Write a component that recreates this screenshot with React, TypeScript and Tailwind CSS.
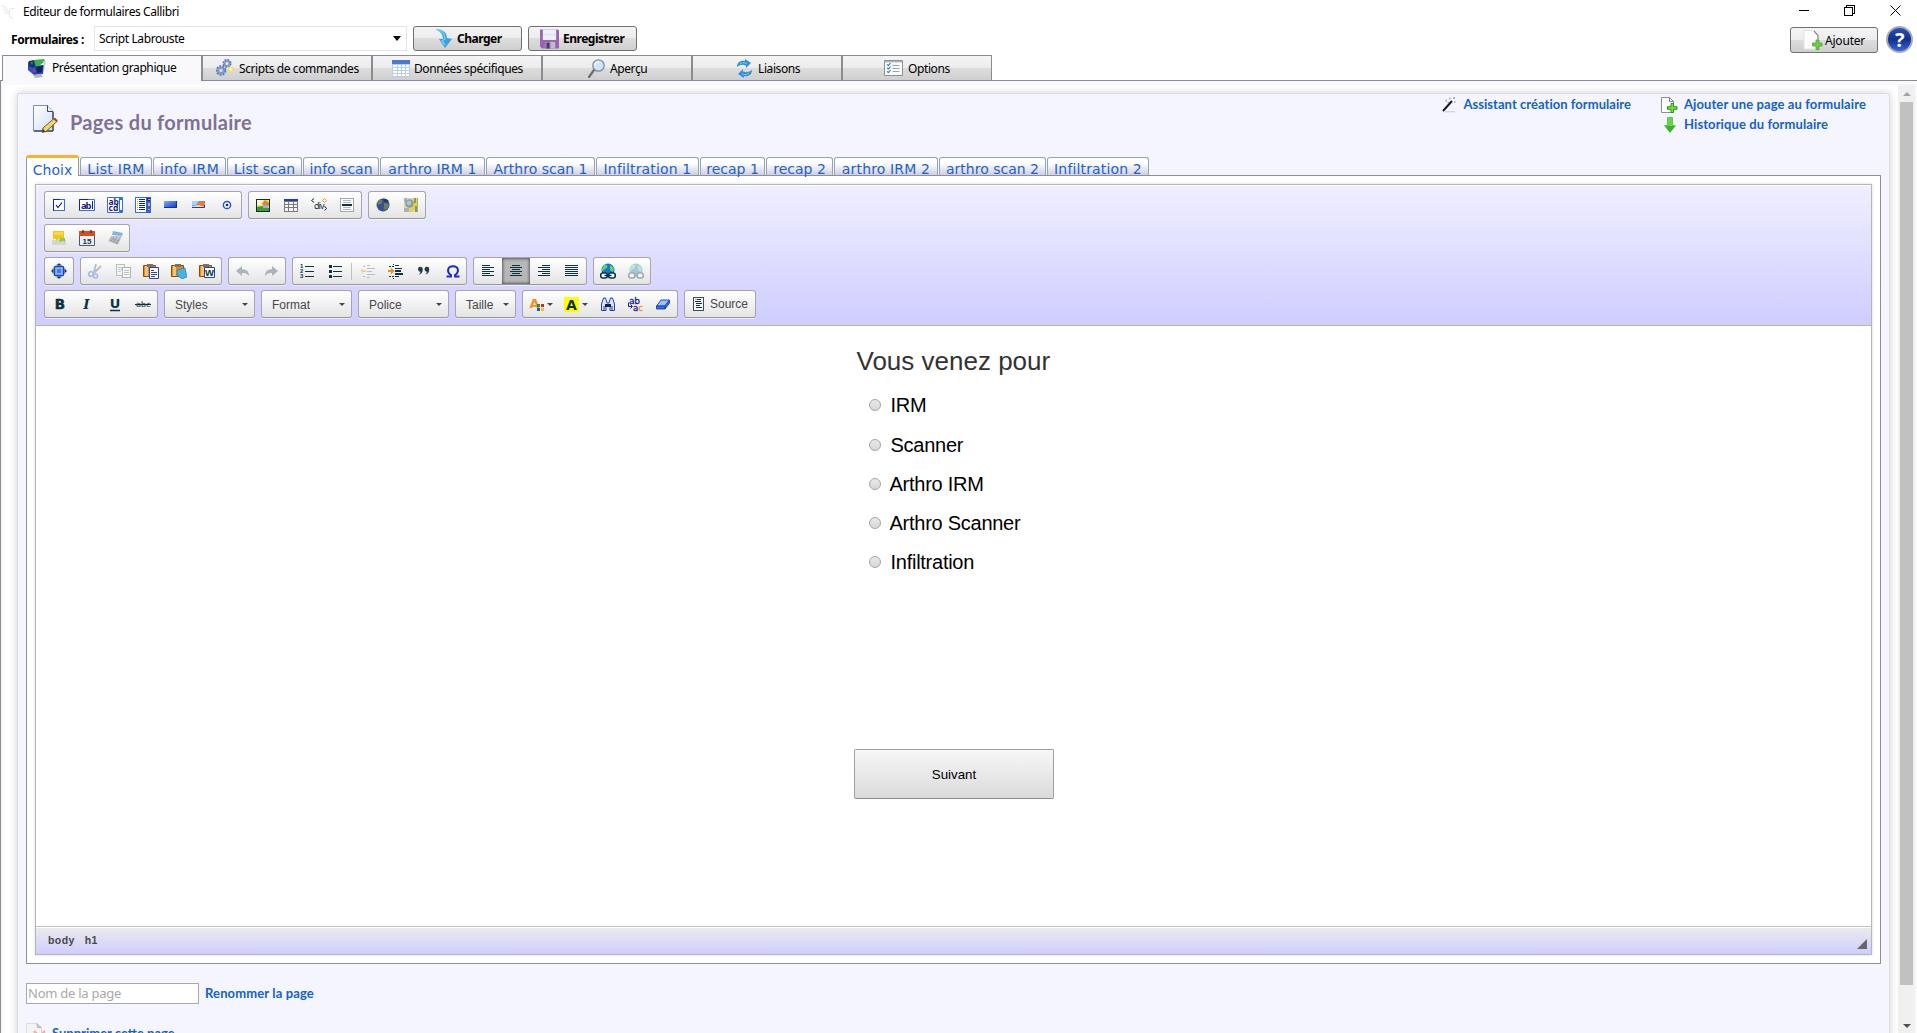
import React from 'react';

type Kids = { children?: React.ReactNode };

function Svg({ children, w = 16, h = 16, box = '0 0 16 16', crisp = false, cls = '' }: Kids & { w?: number; h?: number; box?: string; crisp?: boolean; cls?: string }) {
  return (
    <svg width={w} height={h} viewBox={box} fill="none" shapeRendering={crisp ? 'crispEdges' : 'auto'} className={`block shrink-0 ${cls}`}>
      {children}
    </svg>
  );
}

/* ---------- window level icons ---------- */

const BirdLogo = () => (
  <Svg w={14} h={14}>
    <path d="M0 1c3 1 5 2 6 5M1 5c2 0 4 1 5 3M3 9c2 0 3 0 4 1M14 4c-4-1-6 2-6 5 0 4 2 6 5 6" stroke="#e2dfdb" strokeWidth="1.1" />
  </Svg>
);

const LoadIcon = () => (
  <Svg w={17} h={19} box="0 0 17 19">
    <path d="M0 0C7 0 12 3 12 9l5 1-7 9-6-9h4C8 5 5 2 0 0z" fill="#36a3e3" />
    <path d="M3 1c5 1 7 4 7 9l-3 2 3 4" stroke="#7fcaf2" strokeWidth="1.4" />
  </Svg>
);

const SaveIcon = () => (
  <Svg w={19} h={20} box="0 0 20 20">
    <path d="M0 0h19l1 1v19H2l-2-2z" fill="#9a63b4" />
    <path d="M3 0h14v11H3z" fill="#eef0f8" />
    <path d="M3 5h14v1H3z" fill="#d9dcea" />
    <path d="M5 13h11v7H5z" fill="#8f8a99" />
    <path d="M7 14h3v6H7z" fill="#5d2c7c" />
    <path d="M11 13h5v7h-5z" fill="#bfbcc9" />
  </Svg>
);

const PresentationIcon = () => (
  <Svg w={18} h={19} box="0 0 18 19">
    <path d="M0 3 7 1l2 6 7-1-1 9-9 1-6-5z" fill="#2748c4" />
    <path d="M1 2l6-1 2 4-4 4-4-2z" fill="#1c2f6c" />
    <path d="M6 1l10-1 1 2-7 6-3-2z" fill="#37b24a" />
    <path d="M1 8l5 1 2 3-4 1-3-3z" fill="#2b52d6" />
    <path d="M8 8l7-2-1 7-5 1z" fill="#14235a" />
    <path d="M2 3l3 0-1 3z" fill="#2e8d3a" />
    <path d="M5 10l3 2-3 2z" fill="#c8324f" />
    <path d="M5 16l8-1 2 3-8 1z" fill="#b4b4bb" />
    <path d="M15 2l3 0-2 9z" fill="#c9cbd2" />
  </Svg>
);

const GearsIcon = () => (
  <Svg w={18} h={18} box="0 0 18 18">
    <circle cx="11" cy="4.5" r="3.2" stroke="#5a78b8" strokeWidth="2.6" strokeDasharray="1.7 0.8" />
    <circle cx="11" cy="4.5" r="2.4" stroke="#7e98cd" strokeWidth="1.6" />
    <circle cx="5" cy="11.5" r="4" stroke="#5a78b8" strokeWidth="2.6" strokeDasharray="1.9 0.9" />
    <circle cx="5" cy="11.5" r="2.8" stroke="#7e98cd" strokeWidth="2" />
    <path d="M14.5 7v7M11 10.500h7M12 8l5 5M17 8l-5 5" stroke="#f5dd7a" strokeWidth="1.3" />
    <circle cx="14.500" cy="10.500" r="1.4" fill="#fff6c4" />
  </Svg>
);

const GridIcon = () => (
  <Svg w={18} h={17} box="0 0 18 17" crisp>
    <path d="M0 0h18v17H0z" fill="#b7cdee" />
    <path d="M0 0h18v4H0z" fill="#4a7ad0" />
    <path d="M1 5h4v2H1zM6 5h3v2H6zM10 5h3v2h-3zM14 5h3v2h-3zM1 8h4v2H1zM6 8h3v2H6zM10 8h3v2h-3zM14 8h3v2h-3zM1 11h4v2H1zM6 11h3v2H6zM10 11h3v2h-3zM14 11h3v2h-3zM1 14h4v2H1zM6 14h3v2H6zM10 14h3v2h-3zM14 14h3v2h-3z" fill="#fff" />
  </Svg>
);

const MagnifierIcon = () => (
  <Svg w={17} h={19} box="0 0 17 19">
    <path d="M1 18l5-7" stroke="#6f6b6b" strokeWidth="2.2" strokeLinecap="round" />
    <circle cx="10.500" cy="6.500" r="5.700" fill="#cfe5f8" stroke="#7c8fa8" strokeWidth="1.3" />
    <path d="M7 6c0-2 2-3.500 4-3" stroke="#fff" strokeWidth="1.4" />
  </Svg>
);

const RefreshIcon = () => (
  <Svg w={15} h={19} box="0 0 15 19">
    <path d="M0 8C0 3 4 1 8 2V0l6 4-5 5V6.500C5 5 3 6 0 8z" fill="#2f93d3" />
    <path d="M15 11c0 5-4 7-8 6v2l-6-4 5-5v2.500c4 1.500 6 .5 9-1.500z" fill="#2f93d3" />
    <path d="M3 5c2-1.500 4-1.500 7-.5M5 15c3 1 5 1 7-1" stroke="#7dc6ee" />
  </Svg>
);

const OptionsIcon = () => (
  <Svg w={19} h={16} box="0 0 19 16">
    <path d="M.5.5h18v15H.5z" fill="#fbfbfc" stroke="#8b8f96" />
    <path d="M1 1h17v1.500H1z" fill="#b4b8c2" />
    <path d="M8.500 5.500h7M8.500 8.500h7M8.500 11.500h7" stroke="#9b9fb0" />
    <path d="M3 4.500l1.500 1L6.500 3M3 8l1.500 1 2-2.500M3 11.500l1.500 1 2-2.500" stroke="#2b84b4" strokeWidth="1.2" />
  </Svg>
);

const AddPageIcon = () => (
  <Svg w={17} h={16} box="0 0 17 16">
    <path d="M.5.500h8l4 4v11H.500z" fill="#fff" stroke="#8d8d96" />
    <path d="M8.500.500v4h4" stroke="#7f7f86" />
    <path d="M10 6.500h2.500v3.200H16v2.600h-3.500v3.200H10v-3.200H6.500V9.700H10z" fill="#7be03c" stroke="#2a9a17" strokeWidth="1" />
  </Svg>
);

const NewFormIcon = () => (
  <Svg w={20} h={20} box="0 0 20 20">
    <path d="M1 .5h10l4 5V19H1z" fill="#fdfdfd" stroke="#e2e2e2" />
    <path d="M11 1l4 4.500v4" stroke="#8c8c8c" strokeWidth="1.2" />
    <path d="M13 10h3v3h3v3h-3v3.500h-3V16H9.500v-3H13z" fill="#6fce45" stroke="#4aa52c" strokeWidth=".8" />
  </Svg>
);

const HelpIcon = () => (
  <span className="flex h-[27px] w-[27px] items-center justify-center rounded-full border-[2px] border-[#a9abb3] bg-linear-to-b from-[#2a52b8] via-[#12308f] to-[#3a66e0] font-['Noto_Sans',sans-serif] text-[20px] leading-none font-bold text-white">?</span>
);

const WandIcon = () => (
  <Svg w={15} h={16} box="0 0 15 16">
    <path d="M1 14 10 4" stroke="#16161c" strokeWidth="1.9" />
    <path d="M3 14.800h10" stroke="#c9c9cf" />
    <path d="M7 1.500h1.500M3.500 3.500H5M11 1h2M12 5h1.500M5.500 5.500H7" stroke="#9c9ca3" strokeWidth="1.300" />
  </Svg>
);

const GreenArrow = () => (
  <Svg w={12} h={16} box="0 0 12 16">
    <path d="M3.500.500h5v8h3L6 15.500.500 8.500h3z" fill="#62d64a" stroke="#4cc038" strokeWidth=".8" />
    <path d="M1 9h10L6 15.500z" fill="#3fb02d" />
  </Svg>
);

const EditPageIcon = () => (
  <Svg w={25} h={29} box="0 0 25 29">
    <defs>
      <linearGradient id="sheet" x1="0" y1="0" x2="1" y2="1">
        <stop offset="0" stopColor="#ffffff" />
        <stop offset="1" stopColor="#cfe0f6" />
      </linearGradient>
    </defs>
    <path d="M.5.500h14l5.500 6v19.500H.500z" fill="url(#sheet)" stroke="#7d93b5" />
    <path d="M20 7v19M1 26h19" stroke="#3d4f6d" strokeWidth="1.4" />
    <path d="M14.500.500v6H20" fill="#e8f0fb" stroke="#35496b" />
    <path d="M9 27l1-4L21 13.500l3 3L13 26.500z" fill="#f3d66a" stroke="#6f5a2a" />
    <path d="M20.500 14l1.500-1.200 2.800 2.600-1.300 1.500z" fill="#a83a32" />
    <path d="M9 28l1-4 2.500 2.500z" fill="#4a3a22" />
  </Svg>
);

const DeletePageIcon = () => (
  <Svg w={20} h={20} box="0 0 20 20">
    <path d="M.5.500h11l4 4V20H.500z" fill="#f4f4f4" stroke="#dcdcdc" />
    <path d="M11 .500l.5 4h4" fill="#c9c9c9" stroke="#b5b5b5" />
    <path d="M8 8l11 11M19 8 8 19" stroke="#efb0b0" strokeWidth="2.500" />
  </Svg>
);

/* ---------- editor toolbar icons, 16 x 16 ---------- */

const D = '#0b3340';
const I: Record<string, React.ReactNode> = {
  checkbox: (
    <Svg crisp>
      <path d="M2.500 2.500h11v11h-11z" fill="#fff" stroke="#2f6fe4" />
      <path d="M2.500 14V2.500H9" stroke="#1a1fb0" />
      <path d="M5 8l2 2.500L11 5.500" stroke="#111a6e" shapeRendering="auto" strokeWidth="1.200" />
    </Svg>
  ),
  text: (
    <Svg>
      <path d="M.5 2.500h15v11H.500z" fill="#fff" stroke="#2f6fe4" />
      <path d="M.5 13.500v-11H9" stroke="#1a1fb0" />
      <text x="2" y="11.500" fontFamily="Noto Sans" fontSize="9.500" fontWeight="700" fill="#1a1a8c" textLength="10.500">ab</text>
      <path d="M13.500 4v8" stroke="#1a1a8c" />
    </Svg>
  ),
  area: (
    <Svg>
      <path d="M.5.500h15v15H.500z" fill="#fff" stroke="#2f6fe4" />
      <text x="1.500" y="7.500" fontFamily="Noto Sans" fontSize="8.500" fontWeight="700" fill="#1a1a8c">
        ab<tspan x="1.500" dy="6.700">cd</tspan>
      </text>
      <path d="M12.500 0v16" stroke="#2f6fe4" />
      <path d="M13 1h2v2h-2zM13 13h2v2h-2z" fill="#2f6fe4" />
    </Svg>
  ),
  list: (
    <Svg crisp>
      <path d="M.5.500h15v15H.500z" fill="#fff" stroke="#2f6fe4" />
      <path d="M4 2h6v1H4zM4 4h6v1H4zM4 6h6v1H4zM4 8h6v1H4zM4 10h6v1H4zM4 12h6v1H4z" fill={D} />
      <path d="M2 2h1v1H2zM2 4h1v1H2zM2 6h1v1H2zM2 8h1v1H2zM2 10h1v1H2zM2 12h1v1H2z" fill="#e8912a" />
      <path d="M11 0h5v16h-5z" fill="#2b62dc" />
      <path d="M12 1h3v3h-3z" fill="#1a1fb0" />
      <path d="M13 2h2v1h-2zM13 6h2v3h-2zM13 12h2v1h-2z" fill="#f2a53c" />
    </Svg>
  ),
  button: (
    <Svg>
      <defs>
        <linearGradient id="bb" x1="0" y1="0" x2="1" y2="1">
          <stop offset="0" stopColor="#7db2f8" />
          <stop offset="1" stopColor="#0a2fc0" />
        </linearGradient>
      </defs>
      <path d="M1 4h13v7H1z" fill="url(#bb)" />
      <path d="M1 10.500h12.500V4" stroke="#0b2fb0" />
    </Svg>
  ),
  imgbutton: (
    <Svg>
      <path d="M1 4h13v7H1z" fill="#4f93ea" />
      <path d="M1 4h7l-3 4H1z" fill="#a9d0fa" />
      <path d="M6 7l3-3 5 2v3l-5 1z" fill="#f07f1f" />
      <path d="M1 9l6-1 7 2v1H1z" fill="#e9dcb0" />
      <path d="M1 10.500h12.500V8" stroke="#1d3da8" />
    </Svg>
  ),
  radio: (
    <Svg>
      <circle cx="8" cy="8" r="3.600" fill="#fff" stroke="#2453d6" strokeWidth="1.500" />
      <circle cx="8" cy="8" r="1.300" fill="#1a1f8c" />
    </Svg>
  ),
  image: (
    <Svg>
      <path d="M1 2h14v13H1z" fill="#0f2c38" />
      <path d="M2 3h12v11H2z" fill="#f4e36a" />
      <path d="M2 3h6l-2 5H2z" fill="#fff8c8" />
      <path d="M2 10l5-1 7 2v3H2z" fill="#3f9b2c" />
      <path d="M7 7l3-4 4 3v3l-4 1z" fill="#ef7d22" />
      <path d="M8 8h5v3H8z" fill="#86b6ec" />
    </Svg>
  ),
  table: (
    <Svg crisp>
      <path d="M1 2h14v13H1z" fill="#7a7a7a" />
      <path d="M1 2h14v2H1z" fill="#1440b8" />
      <path d="M2 5h3v2H2zM6 5h4v2H6zM11 5h3v2h-3zM2 8h3v2H2zM6 8h4v2H6zM11 8h3v2h-3zM2 11h3v3H2zM6 11h4v3H6zM11 11h3v3h-3z" fill="#f4f4f4" />
    </Svg>
  ),
  div: (
    <Svg>
      <text x="3" y="11.800" fontFamily="Noto Sans" fontSize="9" fill={D} textLength="10.500">div</text>
      <path d="M3 1.500.500 3.500l2.500 2M13.500 9l2 2.500-2 2" stroke={D} />
      <path d="M13.500 1.500l2 2-2 2-2-2z" stroke="#ef9a2c" />
    </Svg>
  ),
  rule: (
    <Svg crisp>
      <path d="M1.500 1.500h13v13h-13z" fill="#fafafa" stroke="#a3a8a8" />
      <path d="M4 3h8v1H4zM4 5h8v1H4zM4 10h8v1H4zM4 12h8v1H4z" fill="#b5baba" />
      <path d="M3 7h10v2H3z" fill={D} />
    </Svg>
  ),
  globe: (
    <Svg>
      <circle cx="8" cy="8" r="6.500" fill="#33528f" />
      <path d="M4 3c3-1 4 1 3 3S3 7 2 7c0-2 1-3 2-4zM9 6c3 0 5 1 5 3l-3 4c-2 0-3-2-2-4z" fill="#6f7f55" />
      <path d="M8 1.500c3 0 5 1 6 3l-4 1z" fill="#20386e" />
    </Svg>
  ),
  map: (
    <Svg>
      <path d="M1 1h14v14H1z" fill="#d5d3c6" />
      <path d="M1 1h3v4H1zM1 11h5v4H1z" fill="#b3b1a4" />
      <path d="M5 15c5-3 3-8 6-14h3v8l-5 6z" fill="#e3d53a" />
      <circle cx="6.500" cy="6.500" r="4.200" fill="#97978e" />
      <circle cx="6" cy="6" r="2.400" fill="#8ed0f2" />
      <path d="M11 1h2v5h-2zM12 9h2v6h-2z" fill="#9b9150" />
      <path d="M14 1h1v14h-1z" fill="#a8a694" />
    </Svg>
  ),
  chat: (
    <Svg>
      <path d="M1 10h14v5H1z" fill="#d4d6d4" />
      <path d="M2 1h11v8H8l-3 2V9H2z" fill="#f6c516" />
      <path d="M3 2h9v3H3z" fill="#fbd84c" />
      <path d="M9 8h5v4l-2-1-4 1z" fill="#7fd05c" />
    </Svg>
  ),
  calendar: (
    <Svg>
      <path d="M.500 1.500h15v14H.500z" fill="#e6f2fb" stroke="#4f5a66" />
      <path d="M0 1h16v5H0z" fill="#d7501c" />
      <path d="M4 0v3M12 0v3" stroke="#5d3020" strokeWidth="1.500" />
      <text x="8" y="13.500" textAnchor="middle" fontFamily="Liberation Sans" fontSize="8" fontWeight="700" fill="#26323e">15</text>
    </Svg>
  ),
  keyboard: (
    <Svg>
      <path d="M6 1l10 2-1 3-10-1z" fill="#7db5e0" />
      <path d="M4 6l11 0-4 9-10-4z" fill="#c3c7cb" />
      <path d="M4 8l8 3M3 10l8 3M7 7l-4 5M10 7l-4 6M13 8l-4 6" stroke="#8f969c" strokeWidth=".8" />
    </Svg>
  ),
  maximize: (
    <Svg>
      <circle cx="8" cy="8" r="6.200" stroke={D} strokeWidth="1" />
      <path d="M2.500 2.500h11v11h-11z" fill="#eef3ff" />
      <path d="M3.500 3.500h9v9h-9z" fill="#6aa4f8" stroke="#1b3fc4" />
      <path d="M5.500 5.500h5v5h-5z" fill="#3f7fee" stroke="#b9d3ff" strokeDasharray="1 1" />
      <path d="M8 0l2 2.500H6zM8 16l2-2.500H6zM0 8l2.500-2v4zM16 8l-2.500-2v4z" fill={D} />
    </Svg>
  ),
  cut: (
    <Svg>
      <path d="M9 1 7 9M14 3 7 10" stroke="#b3bfc6" strokeWidth="1.800" />
      <circle cx="4" cy="11" r="2.300" stroke="#a9bbe6" strokeWidth="1.700" />
      <circle cx="8.500" cy="13" r="2" stroke="#a9bbe6" strokeWidth="1.700" />
    </Svg>
  ),
  copy: (
    <Svg crisp>
      <path d="M1.500 1.500h8v11h-8z" fill="#f4f6f6" stroke="#b5c0c0" />
      <path d="M3 4h5v1H3zM3 6h5v1H3zM3 8h3v1H3z" fill="#c2cccc" />
      <path d="M7.500 4.500h8v10h-8z" fill="#f9fafa" stroke="#a9b5b5" />
      <path d="M9 7h5v1H9zM9 9h5v1H9zM9 11h5v1H9z" fill="#b5c0c0" />
    </Svg>
  ),
  paste: (
    <Svg>
      <path d="M.5 2.500h12v11H.500z" fill="#e58a1c" stroke="#8f4c12" />
      <path d="M2 3h3v10H2z" fill="#f9c46a" />
      <path d="M4 1h6v3H4z" fill="#7a7468" />
      <path d="M6.500 4.500h9v11h-9z" fill="#fff" stroke="#2340b8" />
      <path d="M8 7.500h3M8 9.500h6M8 11.500h6M8 13.500h4" stroke="#2340b8" />
    </Svg>
  ),
  pastetext: (
    <Svg>
      <path d="M.5 2.500h12v11H.500z" fill="#e58a1c" stroke="#8f4c12" />
      <path d="M2 3h3v10H2z" fill="#f9c46a" />
      <path d="M4 1h6v3H4z" fill="#7a7468" />
      <path d="M6 7l8-2 2 9-5 2-5-4z" fill="#45b4e2" stroke="#2a7fa8" strokeWidth=".7" />
    </Svg>
  ),
  pasteword: (
    <Svg>
      <path d="M.5 2.500h12v11H.500z" fill="#e58a1c" stroke="#8f4c12" />
      <path d="M2 3h3v10H2z" fill="#f9c46a" />
      <path d="M4 1h6v3H4z" fill="#7a7468" />
      <path d="M5.500 4.500h10v10h-10z" fill="#fff" stroke="#2340b8" />
      <text x="10.500" y="13" textAnchor="middle" fontFamily="Liberation Sans" fontSize="9.500" fontWeight="700" fill={D}>W</text>
    </Svg>
  ),
  undo: (
    <Svg>
      <path d="M1 8l6-5v3.200c4.500 0 7 2 7 6.800-2-2.500-4-3-7-3V13z" fill="#a9b6b9" />
    </Svg>
  ),
  redo: (
    <Svg>
      <path d="M15 8 9 3v3.200c-4.500 0-7 2-7 6.800 2-2.500 4-3 7-3V13z" fill="#a9b6b9" />
    </Svg>
  ),
  ol: (
    <Svg crisp>
      <path d="M6 3h9v1H6zM6 8h9v1H6zM6 13h9v1H6z" fill={D} />
      <text x="1" y="5" fontFamily="Liberation Sans" fontSize="6" fontWeight="700" fill={D}>1</text>
      <text x="1" y="10.200" fontFamily="Liberation Sans" fontSize="6" fontWeight="700" fill={D}>2</text>
      <text x="1" y="15.400" fontFamily="Liberation Sans" fontSize="6" fontWeight="700" fill={D}>3</text>
    </Svg>
  ),
  ul: (
    <Svg crisp>
      <path d="M6 3h9v1H6zM6 8h9v1H6zM6 13h9v1H6z" fill={D} />
      <path d="M2 2h3v3H2zM2 7h3v3H2zM2 12h3v3H2z" fill={D} />
    </Svg>
  ),
  outdent: (
    <Svg crisp>
      <path d="M3 3h2v1H3zM7 2h3v1H7zM7 5h8v1H7zM7 8h5v1H7zM7 11h8v1H7zM3 13h2v1H3zM7 14h3v1H7z" fill="#b2bfc2" />
      <path d="M0 8l3-3v2h3v2H3v2z" fill="#f5cfa0" />
    </Svg>
  ),
  indent: (
    <Svg crisp>
      <path d="M1 3h2v1H1zM4 3h2v1H4zM7 2h4v1H7zM7 5h7v1H7zM7 7h6v2H7zM7 10h8v2H7zM7 13h4v1H7zM1 13h2v1H1zM4 13h2v1H4zM5 1h1v1H5zM5 15h1v1H5z" fill={D} />
      <path d="M6 8 3 5v2H0v2h3v2z" fill="#f0902a" />
    </Svg>
  ),
  quote: (
    <Svg>
      <path d="M2 6a2.400 2.400 0 1 1 4.800.5c0 3-1.800 4.500-3.800 5 1-1 1.300-1.700 1.300-2.700C3 8.700 2 7.500 2 6zM8.500 6a2.400 2.400 0 1 1 4.800.5c0 3-1.800 4.500-3.800 5 1-1 1.300-1.700 1.300-2.700C9.500 8.700 8.500 7.500 8.500 6z" fill="#1f4048" />
    </Svg>
  ),
  omega: (
    <Svg cls="translate-x-px">
      <path d="M1.500 13.500H6V12C3.500 10.500 2.700 8.500 3.200 6.300c1-4 8.600-4 9.600 0 .5 2.200-.3 4.200-2.800 5.700v1.500h4.500" stroke="#1a2bd0" strokeWidth="2" />
    </Svg>
  ),
  left: <Svg crisp><path d="M2 2h8v1H2zM2 4h12v1H2zM2 6h8v1H2zM2 8h12v1H2zM2 10h8v1H2zM2 12h12v1H2z" fill={D} /></Svg>,
  center: <Svg crisp><path d="M4 2h8v1H4zM2 4h12v1H2zM4 6h8v1H4zM2 8h12v1H2zM4 10h8v1H4zM2 12h12v1H2z" fill={D} /></Svg>,
  right: <Svg crisp><path d="M6 2h8v1H6zM2 4h12v1H2zM6 6h8v1H6zM2 8h12v1H2zM6 10h8v1H6zM2 12h12v1H2z" fill={D} /></Svg>,
  justify: <Svg crisp><path d="M1 2h13v1H1zM1 4h13v1H1zM1 6h13v1H1zM1 8h13v1H1zM1 10h13v1H1zM1 12h13v1H1z" fill={D} /></Svg>,
  link: (
    <Svg>
      <circle cx="8" cy="7" r="6.500" fill="#1f6fd6" />
      <path d="M5 1.500c3 0 3 3 1 4S3 8 2 8c0-3 1-5 3-6.500zM10 2l4 3-1 4-3-2z" fill="#4fe05a" />
      <rect x=".8" y="10" width="6.500" height="5" rx="2" fill="#fff" stroke={D} strokeWidth="1.600" />
      <rect x="8.700" y="10" width="6.500" height="5" rx="2" fill="#fff" stroke={D} strokeWidth="1.600" />
      <path d="M4.500 12.500h7" stroke={D} strokeWidth="1.500" />
    </Svg>
  ),
  unlink: (
    <Svg cls="opacity-35">
      <circle cx="8" cy="7" r="6.500" fill="#1f6fd6" />
      <path d="M5 1.500c3 0 3 3 1 4S3 8 2 8c0-3 1-5 3-6.500zM10 2l4 3-1 4-3-2z" fill="#4fe05a" />
      <rect x=".8" y="10" width="6" height="5" rx="2" fill="#fff" stroke={D} strokeWidth="1.600" />
      <rect x="9.200" y="10" width="6" height="5" rx="2" fill="#fff" stroke={D} strokeWidth="1.600" />
    </Svg>
  ),
  bold: <Svg cls="translate-x-px"><text x="8" y="13" textAnchor="middle" fontFamily="DejaVu Sans" fontSize="13.500" fontWeight="700" fill={D} stroke={D} strokeWidth=".5">B</text></Svg>,
  italic: <Svg><text x="7.500" y="13" textAnchor="middle" fontFamily="DejaVu Serif" fontSize="13.500" fontWeight="700" fontStyle="italic" fill={D}>I</text></Svg>,
  underline: (
    <Svg>
      <text x="8" y="12" textAnchor="middle" fontFamily="DejaVu Sans" fontSize="13" fontWeight="700" fill={D}>U</text>
      <path d="M3 14.500h10" stroke={D} strokeWidth="1.500" />
    </Svg>
  ),
  strike: (
    <Svg>
      <text x="1" y="11" fontFamily="DejaVu Sans" fontSize="7.500" fontWeight="700" fill="#5a737b" textLength="14.500">abc</text>
      <path d="M0 8.500h16" stroke={D} />
    </Svg>
  ),
  fore: (
    <Svg>
      <text x="5.500" y="12" textAnchor="middle" fontFamily="DejaVu Sans" fontSize="13" fontWeight="700" fill="#ef8f24">A</text>
      <path d="M8 8h3v3H8z" fill="#1e9a32" />
      <path d="M12 8h3v3h-3z" fill="#e02020" />
      <path d="M8 12h3v3H8z" fill="#1f55e0" />
      <path d="M12 12h3v3h-3z" fill="#f2c21a" />
    </Svg>
  ),
  back: (
    <Svg>
      <path d="M0 1h15v15H0z" fill="#ffff00" />
      <text x="7.500" y="13.500" textAnchor="middle" fontFamily="DejaVu Sans" fontSize="14" fontWeight="700" fill={D}>A</text>
    </Svg>
  ),
  find: (
    <Svg cls="translate-x-px">
      <path d="M1.500 14.500V8l2-6h2l1.500 5h2l1.500-5h2l2 6v6.500H10V10H6v4.500z" fill="#dfe7fc" stroke="#1b3fc4" />
      <path d="M3 10h2v4H3zM11 10h2v4h-2z" fill="#8b93a8" />
      <path d="M5 8h6v3H5z" fill="#11186e" />
    </Svg>
  ),
  replace: (
    <Svg>
      <text x="2" y="7.500" fontFamily="DejaVu Sans" fontSize="9" fill="#1b2490" stroke="#1b2490" strokeWidth=".3" textLength="11">
        ab
      </text>
      <text x="6" y="14.500" fontFamily="DejaVu Sans" fontSize="8.500" fill="#1b2490" stroke="#1b2490" strokeWidth=".3">
        a<tspan fill="#ef9022" stroke="#ef9022">c</tspan>
      </text>
      <path d="M1.500 6.500v4H5M3.500 8.500l2 2-2 2" stroke="#1b2490" />
    </Svg>
  ),
  eraser: (
    <Svg>
      <path d="M6 4h8.500L10 10H1.500z" fill="#9cc4fa" stroke="#1b3fc4" strokeWidth=".9" />
      <path d="M1.500 10H10v3H1.500zM10 10l4.500-6v3L10 13z" fill="#2f6fe4" stroke="#1b3fc4" strokeWidth=".9" />
    </Svg>
  ),
  source: (
    <Svg crisp>
      <path d="M2 1h11v14H2z" fill="#3a4f52" />
      <path d="M3 2h9v12H3z" fill="#f8fafa" />
      <path d="M6 3h4v1H6zM4 5h6v1H4zM5 7h6v1H5zM5 9h4v1H5zM5 11h6v1H5z" fill={D} />
      <path d="M4 3h2v1H4z" fill="#ef9022" />
    </Svg>
  ),
};

/* ---------- editor toolbar parts ---------- */

const Group = ({ children }: Kids) => (
  <div className="flex h-[28px] overflow-hidden rounded-[3px] border border-[#a6a6a6] border-b-[#979797] bg-linear-to-b from-white to-[#e4e4e4] shadow-[0_1px_0_rgba(255,255,255,0.5)]">{children}</div>
);

const Btn = ({ icon, on = false }: { icon: string; on?: boolean }) => (
  <span className={on ? 'flex w-[28px] items-center justify-center bg-[#b8b8b8] shadow-[0_0_3px_1px_rgba(0,0,0,0.5)_inset]' : 'flex w-[28px] items-center justify-center'}>{I[icon]}</span>
);

const Caret = () => <span className="h-0 w-0 border-x-[3px] border-t-[3px] border-x-transparent border-t-[#474747]" />;

const Combo = ({ label, wide = true }: { label: string; wide?: boolean }) => (
  <Group>
    <span className={`flex items-center justify-between pt-px pl-[10px] text-[12px] text-[#474747] ${wide ? 'w-[89px] pr-[6px]' : 'w-[59px] pr-[6px]'}`}>
      {label}
      <Caret />
    </span>
  </Group>
);

const Row = ({ children }: Kids) => <div className="mb-[5px] flex gap-[6px]">{children}</div>;

function EditorToolbar() {
  return (
    <div className="h-[141px] border-b border-[#b6b6b6] bg-linear-to-b from-[#f0efff] to-[#cfcdff] pt-[6px] pl-[8px] shadow-[0_1px_0_#fff_inset]">
      <Row>
        <Group>{['checkbox', 'text', 'area', 'list', 'button', 'imgbutton', 'radio'].map((i) => <Btn key={i} icon={i} />)}</Group>
        <Group>{['image', 'table', 'div', 'rule'].map((i) => <Btn key={i} icon={i} />)}</Group>
        <Group>{['globe', 'map'].map((i) => <Btn key={i} icon={i} />)}</Group>
      </Row>
      <Row>
        <Group>{['chat', 'calendar', 'keyboard'].map((i) => <Btn key={i} icon={i} />)}</Group>
      </Row>
      <Row>
        <Group><Btn icon="maximize" /></Group>
        <Group>{['cut', 'copy', 'paste', 'pastetext', 'pasteword'].map((i) => <Btn key={i} icon={i} />)}</Group>
        <Group><Btn icon="undo" /><Btn icon="redo" /></Group>
        <Group>
          <Btn icon="ol" />
          <Btn icon="ul" />
          <span className="mx-[2px] mt-[5px] h-[17px] w-px bg-[#c0c0c0]" />
          {['outdent', 'indent', 'quote', 'omega'].map((i) => <Btn key={i} icon={i} />)}
        </Group>
        <Group><Btn icon="left" /><Btn icon="center" on /><Btn icon="right" /><Btn icon="justify" /></Group>
        <Group><Btn icon="link" /><Btn icon="unlink" /></Group>
      </Row>
      <Row>
        <Group>{['bold', 'italic', 'underline', 'strike'].map((i) => <Btn key={i} icon={i} />)}</Group>
        <Combo label="Styles" />
        <Combo label="Format" />
        <Combo label="Police" />
        <Combo label="Taille" wide={false} />
        <Group>
          <span className="flex w-[35px] items-center gap-[2px] pl-[6px]">{I.fore}<Caret /></span>
          <span className="flex w-[35px] items-center gap-[2px] pl-[6px]">{I.back}<Caret /></span>
          <Btn icon="find" /><Btn icon="replace" /><Btn icon="eraser" />
        </Group>
        <Group>
          <span className="flex w-[70px] items-center gap-[3px] pl-[6px] text-[12px] text-[#474747]">{I.source}Source</span>
        </Group>
      </Row>
    </div>
  );
}

function EditorBody() {
  return (
    <div className="h-[600px] bg-white">
      <div className="mx-auto w-[200px] pt-[20px] whitespace-nowrap">
        <h1 className="h-[39px] pl-[3px] text-[26px] leading-[30px] text-[#333]">Vous venez pour</h1>
        {['IRM', 'Scanner', 'Arthro IRM', 'Arthro Scanner', 'Infiltration'].map((o, i) => (
          <label key={o} className={`flex items-center pl-[15px] text-[20px] tracking-[-0.26px] text-black ${i === 0 ? 'h-[40px]' : 'h-[39px]'}`}>
            <span className={`h-[12px] w-[12px] rounded-full border border-[#a5a5a5] bg-linear-to-b from-[#e9e9e9] to-[#d8d8d8] ${o.startsWith('Arthro') ? 'mr-[9px]' : 'mr-[10px]'}`} />
            {o}
          </label>
        ))}
        <button className="mt-[168px] flex h-[50px] w-[200px] items-center justify-center rounded-[2px] border border-[#a0a0a0] border-b-[#8e8e8e] bg-linear-to-b from-[#f7f7f7] to-[#dadada] pt-px pl-px text-[13.300px] text-black">Suivant</button>
      </div>
    </div>
  );
}

const pageTabs: [string, string][] = [
  ['Choix', ''],
  ['List IRM', 'w-[72px] tracking-[0.3px]'],
  ['info IRM', 'w-[73px] tracking-[0.3px]'],
  ['List scan', 'w-[75px]'],
  ['info scan', 'w-[76px]'],
  ['arthro IRM 1', 'w-[105px] tracking-[0.15px]'],
  ['Arthro scan 1', 'w-[109px]'],
  ['Infiltration 1', 'w-[103px] tracking-[0.15px]'],
  ['recap 1', 'w-[65px]'],
  ['recap 2', 'w-[67px]'],
  ['arthro IRM 2', 'w-[104px] tracking-[0.15px]'],
  ['arthro scan 2', 'w-[107px]'],
  ['Infiltration 2', 'w-[102px] tracking-[0.15px]'],
];

function FormPanel() {
  return (
    <div className="min-h-[960px] rounded-[2px] border border-[#dcdce3] bg-[#f5f5ff] px-[8px] shadow-[0_0_8px_rgba(0,0,0,0.18)]">
      <div className="flex h-[61px] items-start justify-between">
        <div className="flex items-start gap-[12px] pt-[11px] pl-[7px]">
          <EditPageIcon />
          <h2 className="pt-[3px] font-['Lato',sans-serif] text-[20px] leading-[29px] font-bold tracking-[0.3px] text-[#7f7097]">Pages du formulaire</h2>
        </div>
        <div className="flex gap-[30px] pt-px pr-[15px] font-['Lato',sans-serif] text-[13px] font-bold text-[#1262c9]">
          <a className="flex h-[20px] items-center gap-[6px] tracking-[0.04px]"><WandIcon />Assistant création formulaire</a>
          <div className="tracking-[0.1px]">
            <a className="flex h-[20px] items-center gap-[6px]"><AddPageIcon />Ajouter une page au formulaire</a>
            <a className="flex h-[20px] items-center"><span className="mr-[8px] ml-[3px]"><GreenArrow /></span>Historique du formulaire</a>
          </div>
        </div>
      </div>

      <div className="relative z-10 -mb-px flex h-[21px] items-end gap-px font-['DejaVu_Sans',sans-serif] text-[14px] leading-none whitespace-nowrap text-[#1b63c6]">
        {pageTabs.map(([t, w], i) =>
          i === 0 ? (
            <a key={t} className="flex h-[21px] w-[53px] justify-center rounded-t-[3px] border-x border-t-[3px] border-x-[#919b9c] border-t-[#fbb030] bg-white pt-[5px]">{t}</a>
          ) : (
            <a key={t} className={`mb-px flex h-[18px] justify-center rounded-t-[3px] border border-b-0 border-[#91a7b4] bg-linear-to-b from-white from-30% to-[#cfcfe6] pt-[4px] ${w}`}>{t}</a>
          ),
        )}
      </div>
      <div className="border border-[#8f8f9a] bg-white p-[8px]">
        <div className="border border-[#b6b6b6] shadow-[0_0_3px_rgba(0,0,0,0.15)]">
          <EditorToolbar />
          <EditorBody />
          <div className="flex h-[28px] items-center justify-between border-t border-[#bfbfbf] bg-linear-to-b from-[#ebebeb] to-[#cfcdff] pr-[4px] pl-[12px] text-[10.500px] font-bold text-[#484848] shadow-[0_1px_0_#fff_inset]">
            <div className="flex gap-[10px] tracking-[0.4px]"><span>body</span><span>h1</span></div>
            <Svg w={10} h={10} box="0 0 10 10" cls="mt-[7px]"><path d="M10 0v10H0z" fill="#666" /></Svg>
          </div>
        </div>
      </div>

      <div className="mt-[19px] flex h-[21px] items-center gap-[6px] font-['Noto_Sans',sans-serif] text-[13px]">
        <span className="flex h-[21px] w-[173px] items-center border border-[#a9a9a9] bg-white pl-px tracking-[-0.25px] text-[#a9a9a9]">Nom de la page</span>
        <a className="font-['Lato',sans-serif] text-[13px] font-bold tracking-[0.13px] text-[#1262c9]">Renommer la page</a>
      </div>
      <a className="mt-[19px] flex items-start gap-[6px] font-['Lato',sans-serif] text-[13px] leading-[20px] font-bold text-[#1262c9]">
        <DeletePageIcon />Supprimer cette page
      </a>
    </div>
  );
}

const glossy = 'bg-[linear-gradient(#f4f4f4,#ececec_49%,#dddddd_50%,#cfcfcf)]';

function MainTab({ label, icon, cls, active = false }: { label: string; icon: React.ReactNode; cls: string; active?: boolean }) {
  return (
    <div className={`flex h-[25px] items-center border border-b-0 border-[#8c8b94] ${active ? 'mb-[-1px] h-[26px] bg-[#f9f9fb] pb-px' : glossy} ${cls}`}>
      {icon}
      <span className={active ? 'whitespace-nowrap' : 'pt-[2px] whitespace-nowrap'}>{label}</span>
    </div>
  );
}

export default function App() {
  return (
    <div className="flex h-[1033px] w-[1917px] flex-col overflow-hidden bg-white font-['Liberation_Sans',Arial,sans-serif]">
      <div className="font-['Noto_Sans',sans-serif] text-[12px] tracking-[-0.4px] text-black">
        <div className="flex h-[24px] items-center justify-between pr-[16px] pl-[2px]">
          <div className="flex items-center gap-[7px]"><BirdLogo />Editeur de formulaires Callibri</div>
          <div className="flex items-center gap-[35px] pb-[3px]">
            <Svg w={11} h={11} box="0 0 11 11" crisp><path d="M.5 5.500h10" stroke="#000" /></Svg>
            <Svg w={11} h={11} box="0 0 11 11" crisp><path d="M.5 2.500h8v8h-8zM2.500 2.500v-2h8v8h-2" stroke="#000" /></Svg>
            <Svg w={11} h={11} box="0 0 11 11"><path d="M.5.500l10 10M10.500.500l-10 10" stroke="#000" /></Svg>
          </div>
        </div>

        <div className="flex h-[31px] items-start justify-between pt-[2px] pr-[4px] pl-[11px]">
          <div className="flex h-[25px] items-center">
            <b className="w-[83px] pt-[3px]">Formulaires :</b>
            <div className="flex h-[25px] w-[313px] items-center justify-between border border-[#e2e3ea] pr-[5px] pl-[4px]">
              <span className="pt-px">Script Labrouste</span>
              <span className="h-0 w-0 border-x-[4px] border-t-[5px] border-x-transparent border-t-black" />
            </div>
            <button className={`ml-[6px] flex h-[25px] w-[109px] items-center rounded-[3px] border border-[#707070] pl-[21px] tracking-[-0.5px] ${glossy}`}>
              <LoadIcon /><b className="ml-[5px] pt-px">Charger</b>
            </button>
            <button className={`ml-[6px] flex h-[25px] w-[109px] items-center rounded-[3px] border border-[#707070] pl-[11px] tracking-[-0.5px] ${glossy}`}>
              <SaveIcon /><b className="ml-[4px] pt-px">Enregistrer</b>
            </button>
          </div>
          <div className="flex items-center gap-[8px]">
            <button className={`mt-[1px] flex h-[26px] w-[88px] items-center rounded-[3px] border border-[#707070] pl-[12px] ${glossy}`}>
              <NewFormIcon /><span className="ml-[2px] pt-[2px] tracking-[-0.2px]">Ajouter</span>
            </button>
            <HelpIcon />
          </div>
        </div>

        <div className="relative z-10 flex pl-[2px]">
          <MainTab active cls="w-[200px] pl-[25px] gap-[6px]" icon={<PresentationIcon />} label="Présentation graphique" />
          <MainTab cls="w-[170px] pl-[13px] gap-[5px]" icon={<GearsIcon />} label="Scripts de commandes" />
          <MainTab cls="w-[170px] pl-[19px] gap-[4px]" icon={<GridIcon />} label="Données spécifiques" />
          <MainTab cls="w-[150px] pl-[45px] gap-[5px]" icon={<MagnifierIcon />} label="Aperçu" />
          <MainTab cls="w-[150px] pl-[44px] gap-[6px]" icon={<RefreshIcon />} label="Liaisons" />
          <MainTab cls="w-[150px] pl-[41px] gap-[5px]" icon={<OptionsIcon />} label="Options" />
        </div>
      </div>

      <div className="flex min-h-0 flex-1 border-t border-l border-[#8c8b94] bg-[#f9f9fb] pt-[4px] pr-[2px] pl-[3px]">
        <div className="min-w-0 flex-1 overflow-hidden bg-white pt-[8px] pr-[8px] pl-[13px]">
          <FormPanel />
        </div>
        <div className="flex w-[17px] flex-col items-center bg-[#f0f0f0]">
          <span className="mt-[7px] mb-[6px] h-0 w-0 border-x-[4px] border-b-[4px] border-x-transparent border-b-[#a3a3a3]" />
          <div className="h-[883px] w-[13px] bg-[#c1c1c1]" />
          <span className="mt-[39px] h-0 w-0 border-x-[4px] border-t-[4px] border-x-transparent border-t-[#505050]" />
        </div>
      </div>
    </div>
  );
}
